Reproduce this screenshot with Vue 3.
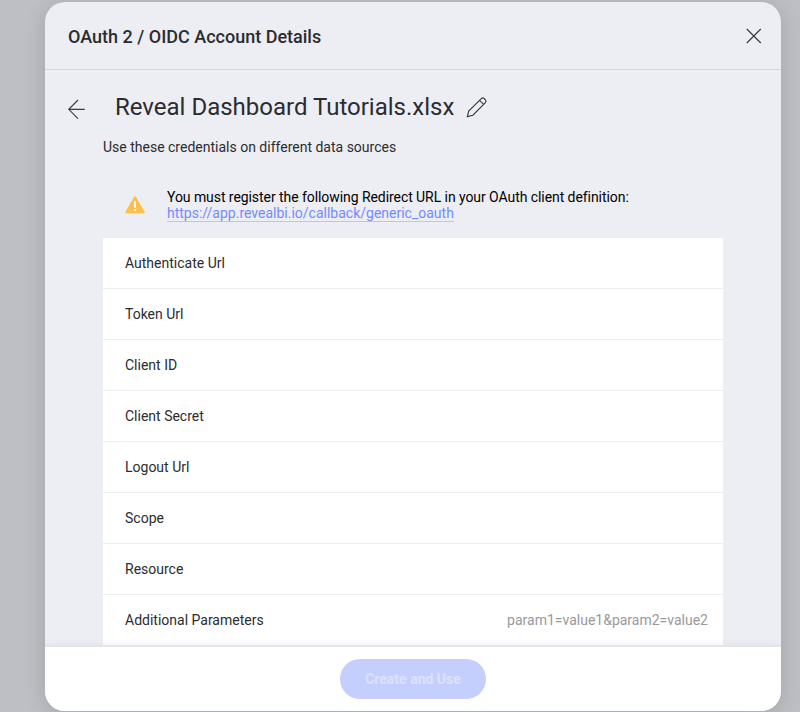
<script setup>
const fields = [
  { label: 'Authenticate Url' },
  { label: 'Token Url' },
  { label: 'Client ID' },
  { label: 'Client Secret' },
  { label: 'Logout Url' },
  { label: 'Scope' },
  { label: 'Resource' },
  { label: 'Additional Parameters', hint: 'param1=value1&param2=value2' },
]
</script>

<template>
  <div class="backdrop">
    <section class="dialog">
      <header class="header">
        <h1 class="title">OAuth 2 / OIDC Account Details</h1>
        <svg class="close" width="16" height="16" viewBox="0 0 16 16">
          <path d="M0.8 1 L14.8 15 M14.8 1 L0.8 15" />
        </svg>
      </header>
      <main class="body">
        <div class="name-row">
          <svg class="back" width="18" height="20" viewBox="0 0 18 20">
            <path d="M17.8 10.3 H1.8 M11 1 L1.8 10.3 L11 19.6" />
          </svg>
          <h2 class="name">Reveal Dashboard Tutorials.xlsx</h2>
          <svg class="pencil" width="22" height="22" viewBox="0 0 22 22">
            <path d="M1.4 20.6 L2.7 15 L15.3 2.6 Q16.7 1.3 18.1 2.5 L19.4 3.8 Q20.7 5.2 19.4 6.6 L6.9 19.2 Z M13.5 4.4 L17.7 8.4" />
          </svg>
        </div>
        <p class="subtitle">Use these credentials on different data sources</p>
        <div class="notice">
          <svg class="warning" width="20" height="18" viewBox="0 0 20 18">
            <path class="triangle" d="M10 1 L19 16.5 H1 Z" />
            <path class="mark" d="M10 5.2 V11.4 M10 13 V15" />
          </svg>
          <div class="notice-text">
            <div class="message">You must register the following Redirect URL in your OAuth client definition:</div>
            <a class="link">https://app.revealbi.io/callback/generic_oauth</a>
          </div>
        </div>
        <div class="fields">
          <div v-for="field in fields" :key="field.label" class="field">
            <span class="label">{{ field.label }}</span>
            <span v-if="field.hint" class="hint">{{ field.hint }}</span>
          </div>
        </div>
      </main>
      <footer class="footer">
        <button class="submit" disabled>Create and Use</button>
      </footer>
    </section>
  </div>
</template>

<style>
body { margin: 0; }
</style>

<style scoped>
.backdrop {
  box-sizing: border-box;
  height: 712px;
  padding: 2px 19px 1px 45px;
  overflow: hidden;
  background: #bebfc4;
  font-family: Roboto, sans-serif;
  color: #2b2c2f;
}
.dialog {
  display: flex;
  flex-direction: column;
  height: 708.5px;
  border-radius: 20px;
  overflow: hidden;
  background: #edeef4;
  box-shadow: 0 3px 22px rgba(0, 0, 0, 0.14);
}
.header {
  box-sizing: border-box;
  display: flex;
  flex: none;
  justify-content: space-between;
  align-items: center;
  height: 68px;
  padding: 2px 19px 0 23px;
  border-bottom: 1px solid #d5d6dc;
}
.title {
  margin: 0;
  font-size: 18px;
  font-weight: 500;
  line-height: 24px;
}
svg { display: block; flex: none; }
path { fill: none; stroke: #3a3b3e; stroke-width: 1.15; }
.close { margin-bottom: 2px; }
.body {
  flex: 1;
  min-height: 0;
  overflow: hidden;
}
.name-row {
  display: flex;
  align-items: center;
  height: 32px;
  padding: 21px 0 0 22px;
}
.back { margin-top: 4px; }
.name {
  margin: 0 0 0 30px;
  font-size: 24px;
  font-weight: 400;
  line-height: 32px;
  white-space: nowrap;
}
.pencil { margin-left: 12px; }
.subtitle {
  margin: 14px 0 0 58px;
  font-size: 14px;
  line-height: 20px;
}
.notice {
  display: flex;
  height: 49px;
  padding: 32px 0 0 80px;
}
.warning { margin-top: 7px; }
.triangle { fill: #ffbf49; stroke: #ffbf49; stroke-width: 1.6; stroke-linejoin: round; }
.mark { stroke: #fff; stroke-width: 2; }
.notice-text {
  margin-left: 22px;
  font-size: 14px;
  line-height: 16px;
  color: #000;
}
.message { letter-spacing: -0.065px; }
.link {
  display: inline-block;
  color: #748bfb;
  border-bottom: 1px solid #b8c4fb;
}
.fields {
  width: 620px;
  margin-left: 58px;
  background: #fff;
}
.field {
  box-sizing: border-box;
  display: flex;
  justify-content: space-between;
  align-items: center;
  height: 51px;
  padding: 0 15px 0 22px;
  border-bottom: 1px solid #edeef4;
  font-size: 14px;
}
.hint { color: #999; }
.footer {
  position: relative;
  box-sizing: border-box;
  display: flex;
  flex: none;
  justify-content: center;
  height: 65.5px;
  padding-top: 12px;
  border-top: 2px solid #e4e5ec;
  background: #fff;
  box-shadow: 0 0 8px rgba(0, 0, 0, 0.06);
}
.submit {
  width: 146px;
  height: 40px;
  padding: 0;
  border: 0;
  border-radius: 20px;
  background: #c5cffd;
  color: #dce2fe;
  font: 700 14px Roboto, sans-serif;
}
</style>
